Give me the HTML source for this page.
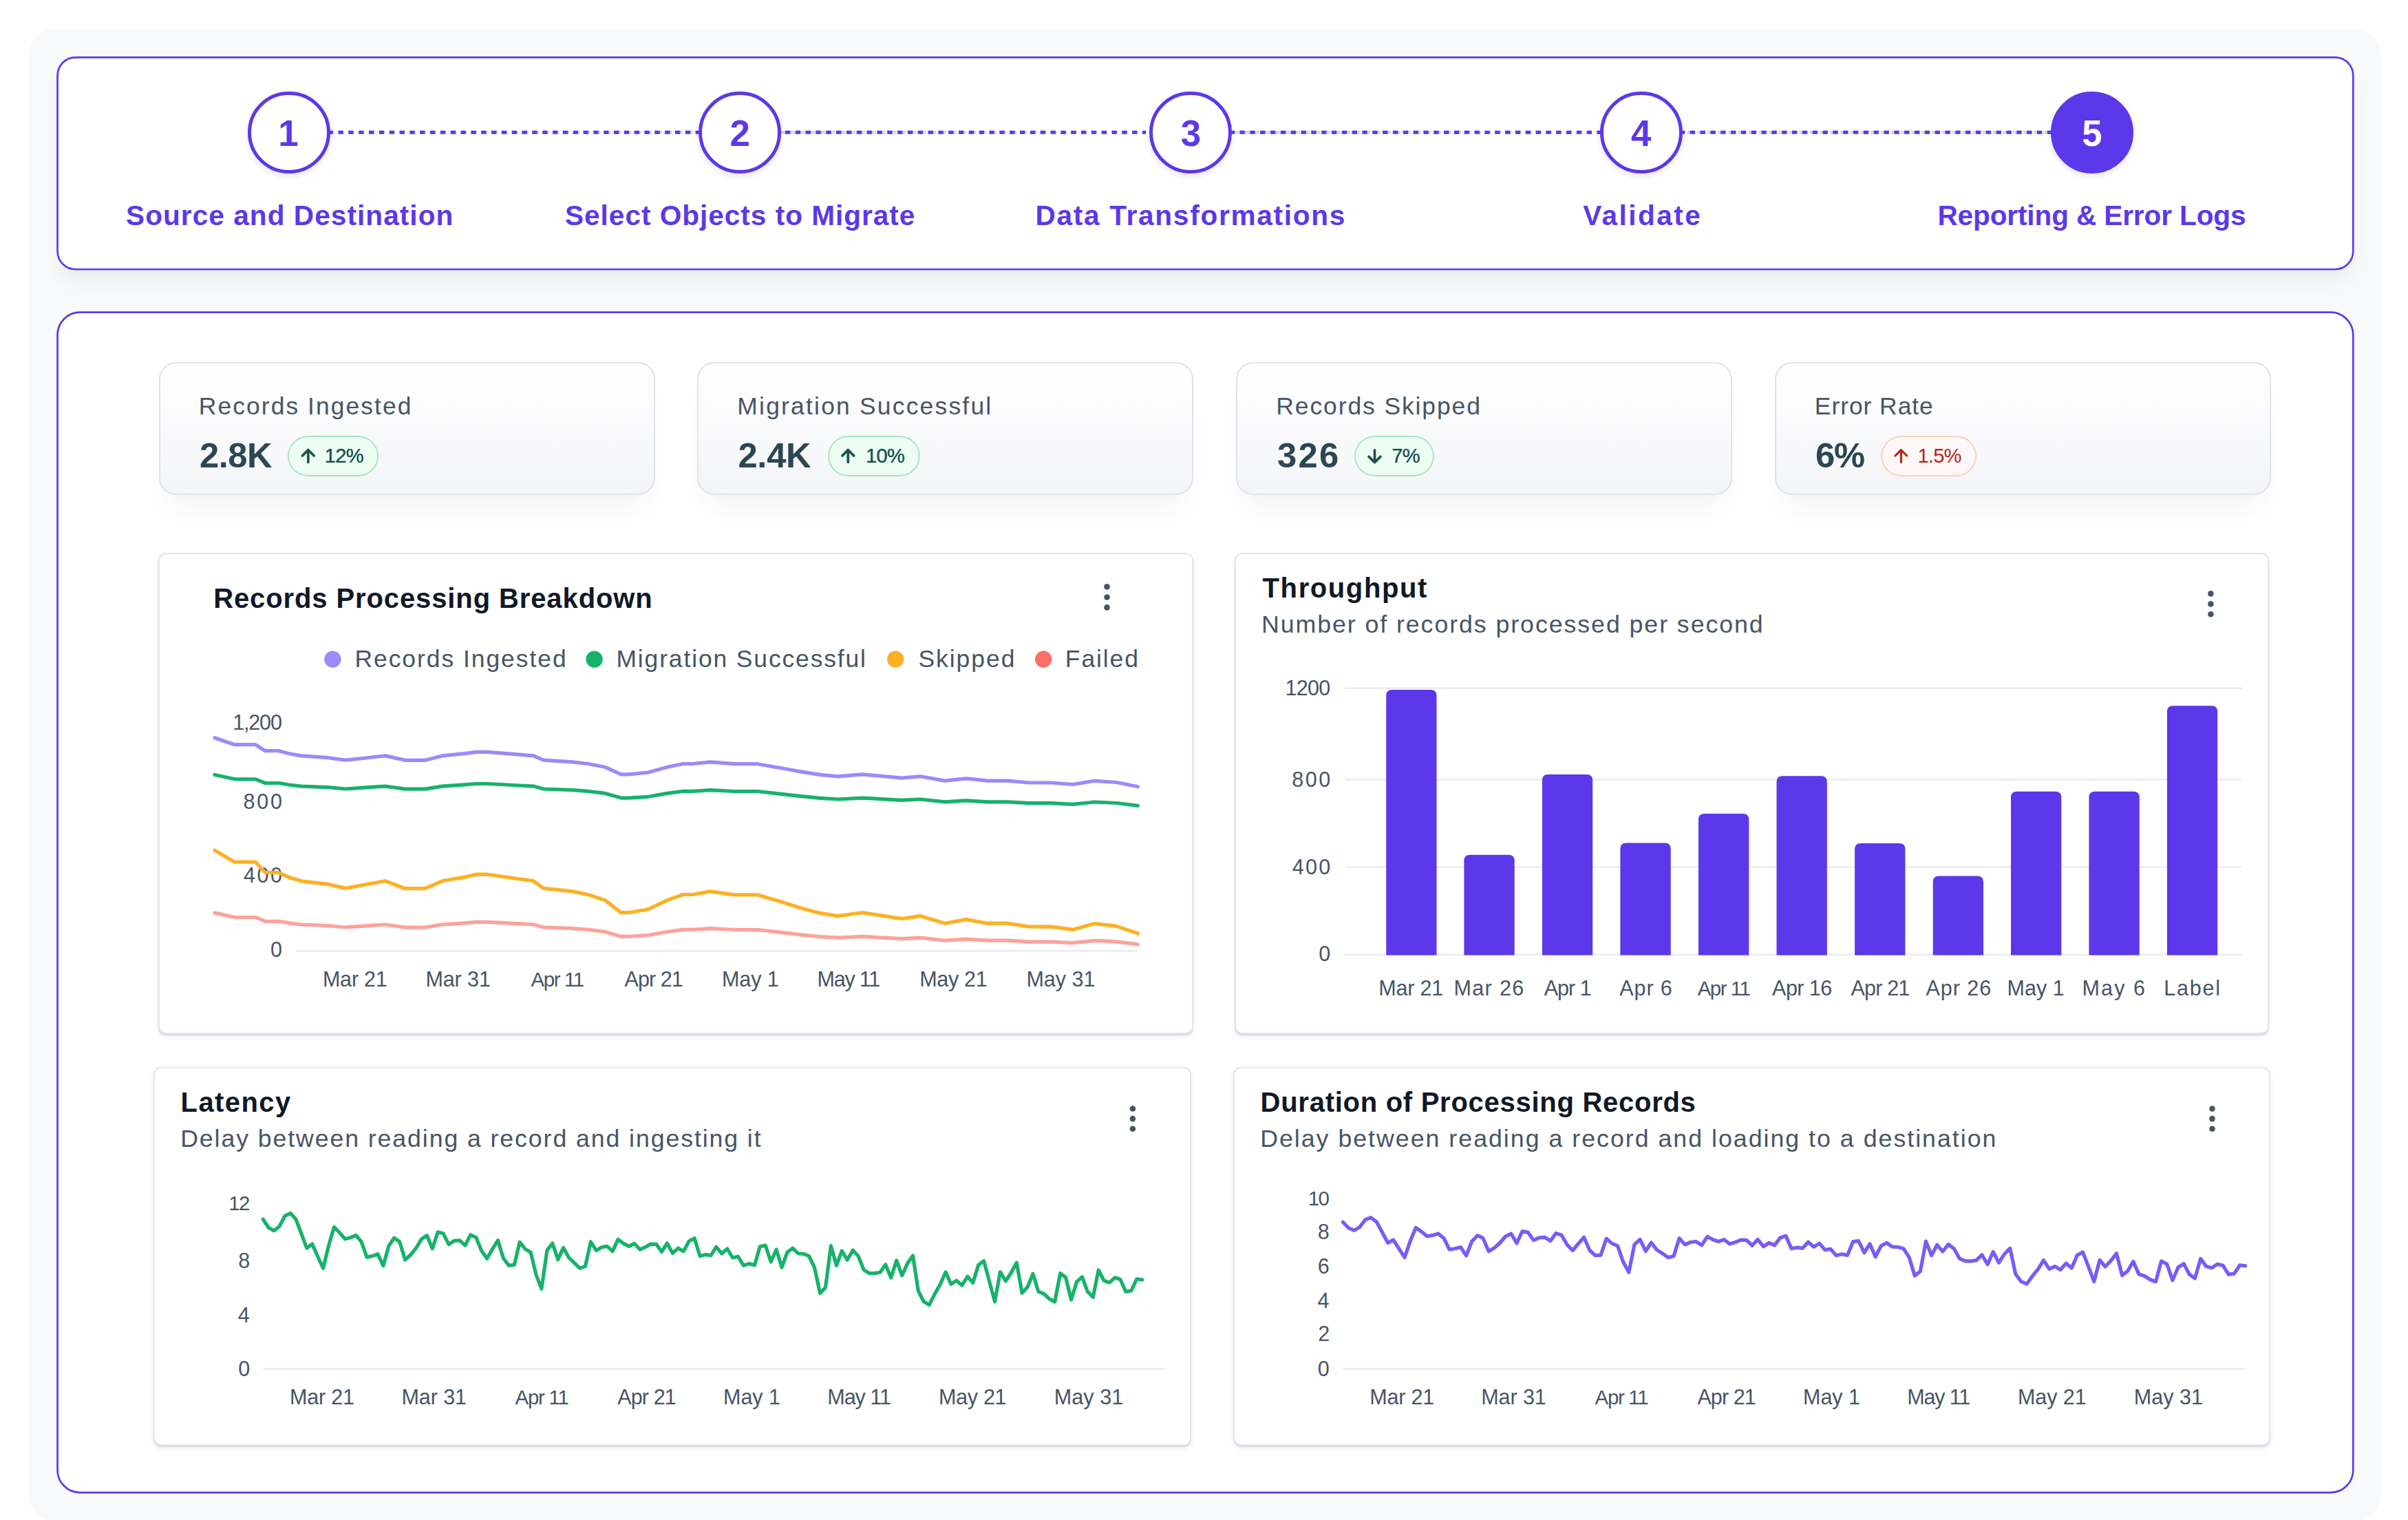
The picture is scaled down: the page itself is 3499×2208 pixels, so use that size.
<!DOCTYPE html>
<html lang="en"><head><meta charset="utf-8"><title>Migration Reporting &amp; Error Logs</title>
<style>
html,body{margin:0;padding:0;background:#fff;}
body{width:3499px;height:2208px;position:relative;overflow:hidden;font-family:"Liberation Sans",Arial,sans-serif;}
.t{position:absolute;white-space:nowrap;line-height:1;display:block;}
.abs{position:absolute;box-sizing:border-box;}
.panel{left:42.4px;top:42.3px;width:3417.4px;height:2168px;background:#f8f9fb;border-radius:38px;}
.pcard{background:#fff;}
.kpi{border:2px solid #e0e2ea;border-radius:25px;background:linear-gradient(180deg,#ffffff 0%,#f4f5f8 100%);box-shadow:0 30px 38px -18px rgba(40,50,90,.07);}
.badge{border-radius:30px;border:2px solid #a5e6c3;background:#edfdf4;}
.badge.red{border-color:#fdcdc2;background:#fff8f6;}
.chart{background:#fff;border:2px solid #e3e6ee;border-radius:11px;box-shadow:0 2px 1.5px rgba(190,196,214,.6),0 4px 7px rgba(30,40,70,.07);}
svg{position:absolute;left:0;top:0;overflow:visible;}
svg text{font-family:"Liberation Sans",Arial,sans-serif;}
</style></head><body>

<div class="abs panel"></div>
<header aria-label="Migration steps">
<div class="abs pcard" style="left:82.2px;top:82px;width:3338.4px;height:310.6px;border-radius:27.5px;box-shadow:0 18px 26px -6px rgba(30,40,80,.065);"></div>
<svg width="3499" height="2208"><rect x="83.55" y="83.35" width="3335.7" height="307.9" rx="26.2" fill="none" stroke="#5d37ea" stroke-width="2.7"/></svg>
<svg width="3499" height="2208" viewBox="0 0 3499 2208">
<line x1="476.70" y1="192.3" x2="1017.0" y2="192.3" stroke="#d3d9dc" stroke-width="4.4" stroke-dasharray="7.4 7.53"/>
<line x1="476.70" y1="192.3" x2="1017.0" y2="192.3" stroke="#5d37ea" stroke-width="5" stroke-dasharray="7.42 7.41"/>
<line x1="1133.50" y1="192.3" x2="1665.2" y2="192.3" stroke="#d3d9dc" stroke-width="4.4" stroke-dasharray="7.4 7.22"/>
<line x1="1126.05" y1="192.3" x2="1665.2" y2="192.3" stroke="#5d37ea" stroke-width="5" stroke-dasharray="7.42 7.41"/>
<line x1="1794.00" y1="192.3" x2="2327.0" y2="192.3" stroke="#d3d9dc" stroke-width="4.4" stroke-dasharray="7.4 7.22"/>
<line x1="1786.60" y1="192.3" x2="2327.0" y2="192.3" stroke="#5d37ea" stroke-width="5" stroke-dasharray="7.42 7.41"/>
<line x1="2437.30" y1="192.3" x2="2982.0" y2="192.3" stroke="#d3d9dc" stroke-width="4.4" stroke-dasharray="7.4 7.38"/>
<line x1="2440.90" y1="192.3" x2="2982.0" y2="192.3" stroke="#5d37ea" stroke-width="5" stroke-dasharray="7.42 7.41"/>
</svg>
<div class="abs" style="left:360.1px;top:132.5px;width:119.6px;height:119.6px;border-radius:50%;border:5px solid #5d37ea;background:#fff;box-shadow:0 4px 8px rgba(30,30,80,.11);"></div>
<span id="t1" class="t" style="left:404.31px;top:167.76px;font-size:52.86px;font-weight:700;color:#5d37ea;">1</span>
<span id="t2" class="t" style="left:183.09px;top:293.16px;font-size:40.57px;font-weight:700;color:#5d37ea;letter-spacing:1.055px;">Source and Destination</span>
<div class="abs" style="left:1015.3px;top:132.5px;width:119.6px;height:119.6px;border-radius:50%;border:5px solid #5d37ea;background:#fff;box-shadow:0 4px 8px rgba(30,30,80,.11);"></div>
<span id="t3" class="t" style="left:1060.56px;top:167.76px;font-size:52.86px;font-weight:700;color:#5d37ea;">2</span>
<span id="t4" class="t" style="left:820.99px;top:293.16px;font-size:40.57px;font-weight:700;color:#5d37ea;letter-spacing:0.989px;">Select Objects to Migrate</span>
<div class="abs" style="left:1670.1px;top:132.5px;width:119.6px;height:119.6px;border-radius:50%;border:5px solid #5d37ea;background:#fff;box-shadow:0 4px 8px rgba(30,30,80,.11);"></div>
<span id="t5" class="t" style="left:1715.63px;top:167.76px;font-size:52.86px;font-weight:700;color:#5d37ea;">3</span>
<span id="t6" class="t" style="left:1504.47px;top:293.16px;font-size:40.57px;font-weight:700;color:#5d37ea;letter-spacing:1.727px;">Data Transformations</span>
<div class="abs" style="left:2325.2px;top:132.5px;width:119.6px;height:119.6px;border-radius:50%;border:5px solid #5d37ea;background:#fff;box-shadow:0 4px 8px rgba(30,30,80,.11);"></div>
<span id="t7" class="t" style="left:2369.94px;top:167.76px;font-size:52.86px;font-weight:700;color:#5d37ea;">4</span>
<span id="t8" class="t" style="left:2300.15px;top:293.16px;font-size:40.57px;font-weight:700;color:#5d37ea;letter-spacing:2.487px;">Validate</span>
<div class="abs" style="left:2980.2px;top:132.5px;width:119.6px;height:119.6px;border-radius:50%;border:5px solid #5d37ea;background:#5d37ea;box-shadow:0 4px 8px rgba(30,30,80,.11);"></div>
<span id="t9" class="t" style="left:3025.20px;top:167.76px;font-size:52.86px;font-weight:700;color:#fff;">5</span>
<span id="t10" class="t" style="left:2815.42px;top:293.16px;font-size:40.57px;font-weight:700;color:#5d37ea;letter-spacing:-0.124px;">Reporting &amp; Error Logs</span>
</header>
<main aria-label="Reporting and error logs">
<div class="abs pcard" style="left:82.2px;top:452.3px;width:3338.4px;height:1717.2px;border-radius:34px;"></div>
<svg width="3499" height="2208"><rect x="83.55" y="453.65" width="3335.7" height="1714.5" rx="32.7" fill="none" stroke="#5d37ea" stroke-width="2.7"/></svg>
<section aria-label="Summary metrics">
<div class="abs kpi" style="left:230.5px;top:525.5px;width:721px;height:193.5px;"></div>
<span id="t11" class="t" style="left:288.87px;top:572.53px;font-size:35.41px;font-weight:400;color:#475467;letter-spacing:2.067px;">Records Ingested</span>
<span id="t12" class="t" style="left:289.98px;top:636.57px;font-size:50.71px;font-weight:700;color:#2c4653;letter-spacing:-0.498px;">2.8K</span>
<div class="abs badge " style="left:418.2px;top:632.8px;width:131.5px;height:59.1px;"></div>
<svg width="3499" height="2208"><path d="M447.8 671.4V653.8M439.4 662.0L447.8 653.6L456.2 662.0" fill="none" stroke="#17b26a" stroke-opacity=".75" stroke-width="4.2" stroke-linecap="round" stroke-linejoin="round"/><path d="M447.8 671.4V653.8M439.4 662.0L447.8 653.6L456.2 662.0" fill="none" stroke="#2c4653" stroke-width="3.1" stroke-linecap="round" stroke-linejoin="round"/></svg>
<span id="t13" class="t" style="left:471.78px;top:648.18px;font-size:29.20px;font-weight:400;color:#2c4653;letter-spacing:-0.8px;text-shadow:0 0 1.1px rgba(23,178,106,.95);">12%</span>
<div class="abs kpi" style="left:1013.0px;top:525.5px;width:721px;height:193.5px;"></div>
<span id="t14" class="t" style="left:1071.37px;top:572.53px;font-size:35.41px;font-weight:400;color:#475467;letter-spacing:2.219px;">Migration Successful</span>
<span id="t15" class="t" style="left:1072.48px;top:636.57px;font-size:50.71px;font-weight:700;color:#2c4653;letter-spacing:-0.298px;">2.4K</span>
<div class="abs badge " style="left:1202.7px;top:632.8px;width:134.4px;height:59.1px;"></div>
<svg width="3499" height="2208"><path d="M1232.3 671.4V653.8M1223.9 662.0L1232.3 653.6L1240.7 662.0" fill="none" stroke="#17b26a" stroke-opacity=".75" stroke-width="4.2" stroke-linecap="round" stroke-linejoin="round"/><path d="M1232.3 671.4V653.8M1223.9 662.0L1232.3 653.6L1240.7 662.0" fill="none" stroke="#2c4653" stroke-width="3.1" stroke-linecap="round" stroke-linejoin="round"/></svg>
<span id="t16" class="t" style="left:1258.08px;top:648.18px;font-size:29.20px;font-weight:400;color:#2c4653;letter-spacing:-0.8px;text-shadow:0 0 1.1px rgba(23,178,106,.95);">10%</span>
<div class="abs kpi" style="left:1796.0px;top:525.5px;width:721px;height:193.5px;"></div>
<span id="t17" class="t" style="left:1854.37px;top:572.53px;font-size:35.41px;font-weight:400;color:#475467;letter-spacing:1.920px;">Records Skipped</span>
<span id="t18" class="t" style="left:1855.99px;top:636.57px;font-size:50.71px;font-weight:700;color:#2c4653;letter-spacing:2.317px;">326</span>
<div class="abs badge " style="left:1967.9px;top:632.8px;width:116.5px;height:59.1px;"></div>
<svg width="3499" height="2208"><path d="M1997.5 653.9V671.5M1989.1 663.3L1997.5 671.7L2005.9 663.3" fill="none" stroke="#17b26a" stroke-opacity=".75" stroke-width="4.2" stroke-linecap="round" stroke-linejoin="round"/><path d="M1997.5 653.9V671.5M1989.1 663.3L1997.5 671.7L2005.9 663.3" fill="none" stroke="#2c4653" stroke-width="3.1" stroke-linecap="round" stroke-linejoin="round"/></svg>
<span id="t19" class="t" style="left:2022.34px;top:648.18px;font-size:29.20px;font-weight:400;color:#2c4653;letter-spacing:-0.8px;text-shadow:0 0 1.1px rgba(23,178,106,.95);">7%</span>
<div class="abs kpi" style="left:2578.5px;top:525.5px;width:721px;height:193.5px;"></div>
<span id="t20" class="t" style="left:2636.87px;top:572.53px;font-size:35.41px;font-weight:400;color:#475467;letter-spacing:0.956px;">Error Rate</span>
<span id="t21" class="t" style="left:2637.98px;top:636.57px;font-size:50.71px;font-weight:700;color:#2c4653;letter-spacing:-1.105px;">6%</span>
<div class="abs badge red" style="left:2732.8px;top:632.8px;width:139.0px;height:59.1px;"></div>
<svg width="3499" height="2208"><path d="M2762.4 671.4V653.8M2754.0 662.0L2762.4 653.6L2770.8 662.0" fill="none" stroke="#b42318" stroke-width="3.1" stroke-linecap="round" stroke-linejoin="round"/></svg>
<span id="t22" class="t" style="left:2786.43px;top:648.18px;font-size:29.20px;font-weight:400;color:#b42318;letter-spacing:-0.8px;">1.5%</span>
</section>
<section aria-label="Records Processing Breakdown">
<div class="abs chart" style="left:230px;top:802.5px;width:1503.5px;height:699px;"></div>
<span id="t23" class="t" style="left:310.20px;top:848.74px;font-size:40.00px;font-weight:700;color:#101828;letter-spacing:0.889px;">Records Processing Breakdown</span>
<svg width="3499" height="2208"><circle cx="1608.5" cy="852.4" r="4.3" fill="#475467"/><circle cx="1608.5" cy="867.5" r="4.3" fill="#475467"/><circle cx="1608.5" cy="882.4" r="4.3" fill="#475467"/></svg>
<svg width="3499" height="2208"><circle cx="483.4" cy="957.7" r="12.2" fill="#9b8afb"/><circle cx="863.6" cy="957.7" r="12.2" fill="#17b26a"/><circle cx="1301.2" cy="957.7" r="12.2" fill="#fdb022"/><circle cx="1516.2" cy="957.7" r="12.2" fill="#f97066"/></svg>
<span id="t24" class="t" style="left:515.47px;top:939.93px;font-size:35.41px;font-weight:400;color:#475467;letter-spacing:1.973px;">Records Ingested</span>
<span id="t25" class="t" style="left:895.47px;top:939.93px;font-size:35.41px;font-weight:400;color:#475467;letter-spacing:1.887px;">Migration Successful</span>
<span id="t26" class="t" style="left:1334.38px;top:939.93px;font-size:35.41px;font-weight:400;color:#475467;letter-spacing:2.008px;">Skipped</span>
<span id="t27" class="t" style="left:1547.87px;top:939.93px;font-size:35.41px;font-weight:400;color:#475467;letter-spacing:1.917px;">Failed</span>
<span id="t28" class="t" style="left:338.26px;top:1034.17px;font-size:30.52px;font-weight:400;color:#475467;letter-spacing:-1.183px;">1,200</span>
<span id="t29" class="t" style="left:353.38px;top:1148.87px;font-size:30.52px;font-weight:400;color:#475467;letter-spacing:2.803px;">800</span>
<span id="t30" class="t" style="left:353.99px;top:1256.47px;font-size:30.52px;font-weight:400;color:#475467;letter-spacing:2.497px;">400</span>
<span id="t31" class="t" style="left:392.93px;top:1364.47px;font-size:30.52px;font-weight:400;color:#475467;">0</span>
<span id="t32" class="t" style="left:468.91px;top:1406.87px;font-size:30.52px;font-weight:400;color:#475467;letter-spacing:-0.207px;">Mar 21</span>
<span id="t33" class="t" style="left:618.41px;top:1406.87px;font-size:30.52px;font-weight:400;color:#475467;letter-spacing:-0.087px;">Mar 31</span>
<span id="t34" class="t" style="left:771.40px;top:1407.77px;font-size:29.45px;font-weight:400;color:#475467;letter-spacing:-1.365px;">Apr 11</span>
<span id="t35" class="t" style="left:907.60px;top:1406.87px;font-size:30.52px;font-weight:400;color:#475467;letter-spacing:-0.942px;">Apr 21</span>
<span id="t36" class="t" style="left:1048.96px;top:1406.87px;font-size:30.52px;font-weight:400;color:#475467;letter-spacing:-0.064px;">May 1</span>
<span id="t37" class="t" style="left:1187.46px;top:1406.87px;font-size:30.52px;font-weight:400;color:#475467;letter-spacing:-1.193px;">May 11</span>
<span id="t38" class="t" style="left:1336.21px;top:1406.87px;font-size:30.52px;font-weight:400;color:#475467;letter-spacing:-0.306px;">May 21</span>
<span id="t39" class="t" style="left:1491.41px;top:1406.87px;font-size:30.52px;font-weight:400;color:#475467;letter-spacing:0.014px;">May 31</span>
<svg width="3499" height="2208"><line x1="430.3" y1="1381.2" x2="1652.3" y2="1381.2" stroke="#e9ebf0" stroke-width="2.6"/><polyline points="312.0,1071.7 340.9,1081.7 371.3,1081.7 385.4,1090.7 405.2,1090.7 420.0,1094.7 437.7,1097.9 476.5,1100.6 501.9,1104.2 540.0,1100.0 559.8,1097.9 588.8,1104.3 617.7,1104.3 642.7,1097.9 675.2,1094.6 692.1,1092.3 708.4,1092.3 775.4,1097.9 789.6,1104.2 831.9,1106.8 854.5,1109.5 879.2,1114.3 902.5,1124.9 913.8,1124.9 942.1,1122.0 969.9,1114.3 992.5,1109.5 1006.6,1109.5 1032.0,1106.8 1066.6,1109.7 1100.5,1109.7 1135.1,1115.8 1166.2,1121.4 1191.6,1125.4 1217.7,1127.8 1253.7,1124.9 1310.5,1130.2 1337.1,1127.8 1373.1,1134.1 1404.1,1130.8 1434.5,1134.1 1464.1,1134.1 1495.2,1137.0 1527.7,1137.0 1558.7,1139.5 1590.5,1134.3 1622.3,1136.5 1653.4,1142.8" fill="none" stroke="#9b8afb" stroke-width="5.2" stroke-linejoin="round" stroke-linecap="round"/><polyline points="312.0,1125.5 340.9,1131.8 371.3,1131.8 385.4,1137.5 405.2,1137.5 420.0,1140.0 437.7,1142.1 476.5,1143.7 501.9,1146.0 540.0,1143.4 559.8,1142.1 588.8,1146.1 617.7,1146.1 642.7,1142.1 675.2,1139.9 692.1,1138.5 708.4,1138.5 775.4,1142.1 789.6,1146.0 831.9,1147.7 854.5,1149.4 879.2,1152.4 902.5,1159.1 913.8,1159.1 942.1,1157.3 969.9,1152.4 992.5,1149.4 1006.6,1149.4 1032.0,1147.7 1066.6,1149.5 1100.5,1149.5 1135.1,1153.3 1166.2,1156.9 1191.6,1159.4 1217.7,1161.0 1253.7,1159.1 1310.5,1162.4 1337.1,1161.0 1373.1,1164.9 1404.1,1162.8 1434.5,1164.9 1464.1,1164.9 1495.2,1166.7 1527.7,1166.7 1558.7,1168.3 1590.5,1165.0 1622.3,1166.5 1653.4,1170.4" fill="none" stroke="#17b26a" stroke-width="5.2" stroke-linejoin="round" stroke-linecap="round"/><polyline points="312.0,1235.3 340.9,1252.2 371.3,1252.2 385.4,1267.5 405.2,1267.5 420.0,1274.4 437.7,1279.8 476.5,1284.3 501.9,1290.4 540.0,1283.3 559.8,1279.8 588.8,1290.7 617.7,1290.7 642.7,1279.8 675.2,1274.1 692.1,1270.2 708.4,1270.2 775.4,1279.8 789.6,1290.4 831.9,1294.9 854.5,1299.5 879.2,1307.6 902.5,1325.7 913.8,1325.7 942.1,1320.7 969.9,1307.6 992.5,1299.5 1006.6,1299.5 1032.0,1294.9 1066.6,1299.8 1100.5,1299.8 1135.1,1310.1 1166.2,1319.7 1191.6,1326.4 1217.7,1330.6 1253.7,1325.7 1310.5,1334.6 1337.1,1330.6 1373.1,1341.2 1404.1,1335.6 1434.5,1341.2 1464.1,1341.2 1495.2,1346.1 1527.7,1346.1 1558.7,1350.4 1590.5,1341.6 1622.3,1345.4 1653.4,1356.0" fill="none" stroke="#fdb022" stroke-width="5.2" stroke-linejoin="round" stroke-linecap="round"/><polyline points="312.0,1326.1 340.9,1332.5 371.3,1332.5 385.4,1338.3 405.2,1338.3 420.0,1340.9 437.7,1343.0 476.5,1344.7 501.9,1347.0 540.0,1344.3 559.8,1343.0 588.8,1347.1 617.7,1347.1 642.7,1343.0 675.2,1340.8 692.1,1339.3 708.4,1339.3 775.4,1343.0 789.6,1347.0 831.9,1348.7 854.5,1350.4 879.2,1353.5 902.5,1360.4 913.8,1360.4 942.1,1358.5 969.9,1353.5 992.5,1350.4 1006.6,1350.4 1032.0,1348.7 1066.6,1350.5 1100.5,1350.5 1135.1,1354.4 1166.2,1358.1 1191.6,1360.6 1217.7,1362.2 1253.7,1360.4 1310.5,1363.7 1337.1,1362.2 1373.1,1366.2 1404.1,1364.1 1434.5,1366.2 1464.1,1366.2 1495.2,1368.1 1527.7,1368.1 1558.7,1369.7 1590.5,1366.4 1622.3,1367.8 1653.4,1371.8" fill="none" stroke="#fda29b" stroke-width="5.2" stroke-linejoin="round" stroke-linecap="round"/></svg>
</section>
<section aria-label="Throughput">
<div class="abs chart" style="left:1794px;top:802.5px;width:1503px;height:699px;"></div>
<span id="t40" class="t" style="left:1834.60px;top:833.84px;font-size:40.00px;font-weight:700;color:#101828;letter-spacing:1.596px;">Throughput</span>
<span id="t41" class="t" style="left:1832.94px;top:890.38px;font-size:35.70px;font-weight:400;color:#475467;letter-spacing:1.950px;">Number of records processed per second</span>
<svg width="3499" height="2208"><circle cx="3212.4" cy="862.4" r="4.3" fill="#475467"/><circle cx="3212.4" cy="877.4" r="4.3" fill="#475467"/><circle cx="3212.4" cy="892.3" r="4.3" fill="#475467"/></svg>
<svg width="3499" height="2208"><line x1="1954.4" y1="999.7" x2="3257.5" y2="999.7" stroke="#e9ebf0" stroke-width="2.4"/><line x1="1954.4" y1="1132.5" x2="3257.5" y2="1132.5" stroke="#e9ebf0" stroke-width="2.4"/><line x1="1954.4" y1="1259.6" x2="3257.5" y2="1259.6" stroke="#e9ebf0" stroke-width="2.4"/><line x1="1954.4" y1="1386.7" x2="3257.5" y2="1386.7" stroke="#e9ebf0" stroke-width="2.4"/><path d="M2014.2 1387.6V1010.5Q2014.2 1002.0 2022.7 1002.0H2079.0Q2087.5 1002.0 2087.5 1010.5V1387.6Z" fill="#5d37ea"/><path d="M2127.4 1387.6V1250.3Q2127.4 1241.8 2135.9 1241.8H2192.2000000000003Q2200.7000000000003 1241.8 2200.7000000000003 1250.3V1387.6Z" fill="#5d37ea"/><path d="M2240.9 1387.6V1133.4Q2240.9 1124.9 2249.4 1124.9H2305.7000000000003Q2314.2000000000003 1124.9 2314.2000000000003 1133.4V1387.6Z" fill="#5d37ea"/><path d="M2354.4 1387.6V1233.1Q2354.4 1224.6 2362.9 1224.6H2419.2000000000003Q2427.7000000000003 1224.6 2427.7000000000003 1233.1V1387.6Z" fill="#5d37ea"/><path d="M2468.0 1387.6V1190.6Q2468.0 1182.1 2476.5 1182.1H2532.8Q2541.3 1182.1 2541.3 1190.6V1387.6Z" fill="#5d37ea"/><path d="M2581.5 1387.6V1135.7Q2581.5 1127.2 2590.0 1127.2H2646.3Q2654.8 1127.2 2654.8 1135.7V1387.6Z" fill="#5d37ea"/><path d="M2695.1 1387.6V1233.5Q2695.1 1225.0 2703.6 1225.0H2759.9Q2768.4 1225.0 2768.4 1233.5V1387.6Z" fill="#5d37ea"/><path d="M2808.7 1387.6V1280.9Q2808.7 1272.4 2817.2 1272.4H2873.5Q2882.0 1272.4 2882.0 1280.9V1387.6Z" fill="#5d37ea"/><path d="M2922.0 1387.6V1158.3Q2922.0 1149.8 2930.5 1149.8H2986.8Q2995.3 1149.8 2995.3 1158.3V1387.6Z" fill="#5d37ea"/><path d="M3035.4 1387.6V1158.3Q3035.4 1149.8 3043.9 1149.8H3100.2000000000003Q3108.7000000000003 1149.8 3108.7000000000003 1158.3V1387.6Z" fill="#5d37ea"/><path d="M3148.9 1387.6V1033.7Q3148.9 1025.2 3157.4 1025.2H3213.7000000000003Q3222.2000000000003 1025.2 3222.2000000000003 1033.7V1387.6Z" fill="#5d37ea"/></svg>
<span id="t42" class="t" style="left:1867.56px;top:984.07px;font-size:30.52px;font-weight:400;color:#475467;letter-spacing:-0.717px;">1200</span>
<span id="t43" class="t" style="left:1877.18px;top:1116.97px;font-size:30.52px;font-weight:400;color:#475467;letter-spacing:2.603px;">800</span>
<span id="t44" class="t" style="left:1877.79px;top:1243.77px;font-size:30.52px;font-weight:400;color:#475467;letter-spacing:2.297px;">400</span>
<span id="t45" class="t" style="left:1916.33px;top:1370.17px;font-size:30.52px;font-weight:400;color:#475467;">0</span>
<span id="t46" class="t" style="left:2003.21px;top:1419.97px;font-size:30.52px;font-weight:400;color:#475467;letter-spacing:-0.167px;">Mar 21</span>
<span id="t47" class="t" style="left:2112.41px;top:1419.97px;font-size:30.52px;font-weight:400;color:#475467;letter-spacing:1.372px;">Mar 26</span>
<span id="t48" class="t" style="left:2243.75px;top:1419.97px;font-size:30.52px;font-weight:400;color:#475467;letter-spacing:-1.009px;">Apr 1</span>
<span id="t49" class="t" style="left:2353.30px;top:1419.97px;font-size:30.52px;font-weight:400;color:#475467;letter-spacing:0.890px;">Apr 6</span>
<span id="t50" class="t" style="left:2466.70px;top:1420.87px;font-size:29.45px;font-weight:400;color:#475467;letter-spacing:-1.485px;">Apr 11</span>
<span id="t51" class="t" style="left:2575.10px;top:1419.97px;font-size:30.52px;font-weight:400;color:#475467;letter-spacing:-0.563px;">Apr 16</span>
<span id="t52" class="t" style="left:2689.45px;top:1419.97px;font-size:30.52px;font-weight:400;color:#475467;letter-spacing:-0.802px;">Apr 21</span>
<span id="t53" class="t" style="left:2798.55px;top:1419.97px;font-size:30.52px;font-weight:400;color:#475467;letter-spacing:0.937px;">Apr 26</span>
<span id="t54" class="t" style="left:2916.41px;top:1419.97px;font-size:30.52px;font-weight:400;color:#475467;letter-spacing:0.061px;">May 1</span>
<span id="t55" class="t" style="left:3025.56px;top:1419.97px;font-size:30.52px;font-weight:400;color:#475467;letter-spacing:2.110px;">May 6</span>
<span id="t56" class="t" style="left:3144.31px;top:1419.97px;font-size:30.52px;font-weight:400;color:#475467;letter-spacing:1.792px;">Label</span>
</section>
<section aria-label="Latency">
<div class="abs chart" style="left:222.7px;top:1550px;width:1508px;height:549.5px;"></div>
<span id="t57" class="t" style="left:262.60px;top:1581.04px;font-size:40.00px;font-weight:700;color:#101828;letter-spacing:1.412px;">Latency</span>
<span id="t58" class="t" style="left:262.14px;top:1636.88px;font-size:35.70px;font-weight:400;color:#475467;letter-spacing:1.905px;">Delay between reading a record and ingesting it</span>
<svg width="3499" height="2208"><circle cx="1645.9" cy="1610.5" r="4.3" fill="#475467"/><circle cx="1645.9" cy="1625.1" r="4.3" fill="#475467"/><circle cx="1645.9" cy="1639.7" r="4.3" fill="#475467"/></svg>
<span id="t59" class="t" style="left:332.22px;top:1733.17px;font-size:29.45px;font-weight:400;color:#475467;letter-spacing:-1.620px;">12</span>
<span id="t60" class="t" style="left:346.13px;top:1815.97px;font-size:30.52px;font-weight:400;color:#475467;">8</span>
<span id="t61" class="t" style="left:345.83px;top:1894.87px;font-size:30.52px;font-weight:400;color:#475467;">4</span>
<span id="t62" class="t" style="left:346.13px;top:1972.57px;font-size:30.52px;font-weight:400;color:#475467;">0</span>
<span id="t63" class="t" style="left:420.91px;top:2013.87px;font-size:30.52px;font-weight:400;color:#475467;letter-spacing:-0.167px;">Mar 21</span>
<span id="t64" class="t" style="left:583.51px;top:2013.87px;font-size:30.52px;font-weight:400;color:#475467;letter-spacing:-0.087px;">Mar 31</span>
<span id="t65" class="t" style="left:748.50px;top:2014.77px;font-size:29.45px;font-weight:400;color:#475467;letter-spacing:-1.245px;">Apr 11</span>
<span id="t66" class="t" style="left:897.30px;top:2013.87px;font-size:30.52px;font-weight:400;color:#475467;letter-spacing:-0.902px;">Apr 21</span>
<span id="t67" class="t" style="left:1051.06px;top:2013.87px;font-size:30.52px;font-weight:400;color:#475467;letter-spacing:-0.064px;">May 1</span>
<span id="t68" class="t" style="left:1202.26px;top:2013.87px;font-size:30.52px;font-weight:400;color:#475467;letter-spacing:-1.033px;">May 11</span>
<span id="t69" class="t" style="left:1364.01px;top:2013.87px;font-size:30.52px;font-weight:400;color:#475467;letter-spacing:-0.306px;">May 21</span>
<span id="t70" class="t" style="left:1531.71px;top:2013.87px;font-size:30.52px;font-weight:400;color:#475467;letter-spacing:0.094px;">May 31</span>
<svg width="3499" height="2208"><line x1="382.7" y1="1988.6" x2="1692" y2="1988.6" stroke="#e9ebf0" stroke-width="2.6"/><polyline points="382.3,1771.2 390.2,1783.2 398.2,1787.8 406.1,1781.2 414.0,1766.3 422.0,1762.3 429.9,1770.9 437.8,1791.8 445.8,1813.1 453.7,1807.1 461.6,1825.0 469.6,1842.3 477.5,1809.7 485.5,1782.5 493.4,1790.5 501.3,1799.8 509.3,1797.8 517.2,1794.5 525.1,1803.8 533.1,1826.3 541.0,1824.6 548.9,1821.7 556.9,1838.7 564.8,1810.1 572.7,1798.2 580.7,1803.8 588.6,1830.1 596.5,1823.0 604.5,1813.1 612.4,1800.0 620.3,1794.7 628.3,1813.7 636.2,1789.8 644.1,1791.8 652.1,1807.7 660.0,1802.4 667.9,1801.8 675.9,1809.1 683.8,1793.8 691.7,1797.5 699.7,1817.0 707.6,1828.3 715.5,1814.4 723.5,1801.8 731.4,1827.7 739.3,1838.3 747.3,1837.4 755.2,1804.4 763.1,1814.4 771.1,1819.0 779.0,1851.6 786.9,1872.2 794.9,1816.4 802.8,1806.0 810.7,1829.7 818.7,1812.4 826.6,1827.0 834.5,1834.3 842.5,1842.3 850.4,1839.6 858.4,1803.8 866.3,1816.4 874.2,1811.7 882.2,1810.4 890.1,1817.7 898.0,1800.4 906.0,1806.4 913.9,1810.4 921.8,1806.4 929.8,1815.0 937.7,1811.7 945.6,1807.1 953.6,1807.3 961.5,1818.4 969.4,1806.0 977.4,1820.4 985.3,1813.1 993.2,1817.7 1001.2,1803.1 1009.1,1798.7 1017.0,1824.6 1025.0,1822.4 1032.9,1823.7 1040.8,1811.3 1048.8,1821.0 1056.7,1814.0 1064.6,1827.0 1072.6,1825.4 1080.5,1838.3 1088.4,1835.6 1096.4,1837.9 1104.3,1810.7 1112.2,1809.1 1120.2,1833.0 1128.1,1815.0 1136.0,1841.0 1144.0,1819.0 1151.9,1813.1 1159.8,1821.0 1167.8,1821.4 1175.7,1824.6 1183.6,1841.6 1191.6,1878.8 1199.5,1870.2 1207.4,1809.7 1215.4,1838.3 1223.3,1817.0 1231.2,1830.3 1239.2,1816.1 1247.1,1824.6 1255.0,1844.3 1263.0,1849.6 1270.9,1849.6 1278.9,1848.3 1286.8,1837.0 1294.7,1856.2 1302.7,1831.0 1310.6,1852.9 1318.5,1835.6 1326.5,1824.1 1334.4,1875.5 1342.3,1890.8 1350.3,1895.4 1358.2,1879.8 1366.1,1865.8 1374.1,1847.9 1382.0,1865.5 1389.9,1860.2 1397.9,1866.9 1405.8,1854.3 1413.7,1863.6 1421.7,1837.6 1429.6,1831.7 1437.5,1860.9 1445.5,1890.8 1453.4,1847.6 1461.3,1860.9 1469.3,1848.7 1477.2,1834.3 1485.1,1878.2 1493.1,1869.5 1501.0,1850.3 1508.9,1876.2 1516.9,1879.5 1524.8,1886.8 1532.7,1891.1 1540.7,1849.6 1548.6,1855.6 1556.5,1888.1 1564.5,1862.2 1572.4,1854.9 1580.3,1876.2 1588.3,1884.2 1596.2,1845.0 1604.1,1860.2 1612.1,1863.1 1620.0,1855.8 1627.9,1858.5 1635.9,1876.4 1643.8,1874.8 1651.8,1857.8 1659.7,1859.1" fill="none" stroke="#17b26a" stroke-width="5.2" stroke-linejoin="round" stroke-linecap="round"/></svg>
</section>
<section aria-label="Duration of Processing Records">
<div class="abs chart" style="left:1791.8px;top:1550px;width:1507.5px;height:549.5px;"></div>
<span id="t71" class="t" style="left:1831.60px;top:1581.04px;font-size:40.00px;font-weight:700;color:#101828;letter-spacing:0.725px;">Duration of Processing Records</span>
<span id="t72" class="t" style="left:1831.14px;top:1636.88px;font-size:35.70px;font-weight:400;color:#475467;letter-spacing:2.017px;">Delay between reading a record and loading to a destination</span>
<svg width="3499" height="2208"><circle cx="3214.5" cy="1610.5" r="4.3" fill="#475467"/><circle cx="3214.5" cy="1625.1" r="4.3" fill="#475467"/><circle cx="3214.5" cy="1639.7" r="4.3" fill="#475467"/></svg>
<span id="t73" class="t" style="left:1900.63px;top:1726.07px;font-size:29.45px;font-weight:400;color:#475467;letter-spacing:-1.620px;">10</span>
<span id="t74" class="t" style="left:1914.83px;top:1774.47px;font-size:30.52px;font-weight:400;color:#475467;">8</span>
<span id="t75" class="t" style="left:1914.83px;top:1823.87px;font-size:30.52px;font-weight:400;color:#475467;">6</span>
<span id="t76" class="t" style="left:1914.53px;top:1873.97px;font-size:30.52px;font-weight:400;color:#475467;">4</span>
<span id="t77" class="t" style="left:1915.14px;top:1922.47px;font-size:30.52px;font-weight:400;color:#475467;">2</span>
<span id="t78" class="t" style="left:1914.83px;top:1972.57px;font-size:30.52px;font-weight:400;color:#475467;">0</span>
<span id="t79" class="t" style="left:1990.36px;top:2013.87px;font-size:30.52px;font-weight:400;color:#475467;letter-spacing:-0.227px;">Mar 21</span>
<span id="t80" class="t" style="left:2152.21px;top:2013.87px;font-size:30.52px;font-weight:400;color:#475467;letter-spacing:-0.087px;">Mar 31</span>
<span id="t81" class="t" style="left:2317.60px;top:2014.77px;font-size:29.45px;font-weight:400;color:#475467;letter-spacing:-1.325px;">Apr 11</span>
<span id="t82" class="t" style="left:2466.40px;top:2013.87px;font-size:30.52px;font-weight:400;color:#475467;letter-spacing:-0.902px;">Apr 21</span>
<span id="t83" class="t" style="left:2620.06px;top:2013.87px;font-size:30.52px;font-weight:400;color:#475467;letter-spacing:-0.064px;">May 1</span>
<span id="t84" class="t" style="left:2771.36px;top:2013.87px;font-size:30.52px;font-weight:400;color:#475467;letter-spacing:-1.193px;">May 11</span>
<span id="t85" class="t" style="left:2931.91px;top:2013.87px;font-size:30.52px;font-weight:400;color:#475467;letter-spacing:-0.066px;">May 21</span>
<span id="t86" class="t" style="left:3100.81px;top:2013.87px;font-size:30.52px;font-weight:400;color:#475467;letter-spacing:0.014px;">May 31</span>
<svg width="3499" height="2208"><line x1="1951.4" y1="1988.6" x2="3260.7" y2="1988.6" stroke="#e9ebf0" stroke-width="2.6"/><polyline points="1951.4,1775.2 1959.5,1783.8 1967.7,1787.2 1975.8,1782.4 1984.0,1771.6 1992.1,1768.7 2000.3,1775.0 2008.4,1790.1 2016.6,1805.5 2024.7,1801.1 2032.9,1814.1 2041.0,1826.6 2049.1,1803.1 2057.3,1783.3 2065.4,1789.1 2073.6,1795.8 2081.7,1794.4 2089.9,1792.0 2098.0,1798.7 2106.2,1815.1 2114.3,1813.8 2122.4,1811.7 2130.6,1824.0 2138.7,1803.3 2146.9,1794.7 2155.0,1798.7 2163.2,1817.8 2171.3,1812.7 2179.5,1805.5 2187.6,1796.0 2195.8,1792.2 2203.9,1805.9 2212.0,1788.6 2220.2,1790.1 2228.3,1801.6 2236.5,1797.8 2244.6,1797.3 2252.8,1802.6 2260.9,1791.5 2269.1,1794.2 2277.2,1808.3 2285.3,1816.5 2293.5,1806.4 2301.6,1797.3 2309.8,1816.0 2317.9,1823.7 2326.1,1823.1 2334.2,1799.2 2342.4,1806.4 2350.5,1809.8 2358.7,1833.3 2366.8,1848.3 2374.9,1807.9 2383.1,1800.4 2391.2,1817.5 2399.4,1805.0 2407.5,1815.6 2415.7,1820.8 2423.8,1826.6 2432.0,1824.7 2440.1,1798.7 2448.2,1807.9 2456.4,1804.5 2464.5,1803.5 2472.7,1808.8 2480.8,1796.3 2489.0,1800.7 2497.1,1803.5 2505.3,1800.7 2513.4,1806.9 2521.6,1804.5 2529.7,1801.1 2537.8,1801.3 2546.0,1809.3 2554.1,1800.4 2562.3,1810.7 2570.4,1805.5 2578.6,1808.8 2586.7,1798.2 2594.9,1795.1 2603.0,1813.8 2611.1,1812.2 2619.3,1813.2 2627.4,1804.2 2635.6,1811.2 2643.7,1806.1 2651.9,1815.6 2660.0,1814.4 2668.2,1823.7 2676.3,1821.8 2684.4,1823.4 2692.6,1803.7 2700.7,1802.6 2708.9,1819.9 2717.0,1806.9 2725.2,1825.7 2733.3,1809.8 2741.5,1805.5 2749.6,1811.2 2757.8,1811.5 2765.9,1813.8 2774.0,1826.1 2782.2,1853.1 2790.3,1846.8 2798.5,1803.1 2806.6,1823.7 2814.8,1808.3 2822.9,1818.0 2831.1,1807.7 2839.2,1813.8 2847.3,1828.1 2855.5,1831.9 2863.6,1831.9 2871.8,1830.9 2879.9,1822.8 2888.1,1836.7 2896.2,1818.4 2904.4,1834.3 2912.5,1821.8 2920.7,1813.4 2928.8,1850.7 2936.9,1861.7 2945.1,1865.1 2953.2,1853.7 2961.4,1843.6 2969.5,1830.7 2977.7,1843.4 2985.8,1839.6 2994.0,1844.4 3002.1,1835.3 3010.2,1842.0 3018.4,1823.3 3026.5,1818.9 3034.7,1840.1 3042.8,1861.7 3051.0,1830.5 3059.1,1840.1 3067.3,1831.2 3075.4,1820.8 3083.6,1852.6 3091.7,1846.3 3099.8,1832.4 3108.0,1851.1 3116.1,1853.5 3124.3,1858.8 3132.4,1861.9 3140.6,1831.9 3148.7,1836.2 3156.9,1859.8 3165.0,1841.0 3173.2,1835.8 3181.3,1851.1 3189.4,1856.9 3197.6,1828.5 3205.7,1839.6 3213.9,1841.7 3222.0,1836.4 3230.2,1838.3 3238.3,1851.3 3246.5,1850.1 3254.6,1837.8 3262.7,1838.8" fill="none" stroke="#7a5af8" stroke-width="5.2" stroke-linejoin="round" stroke-linecap="round"/></svg>
</section>
</main>
</body></html>
